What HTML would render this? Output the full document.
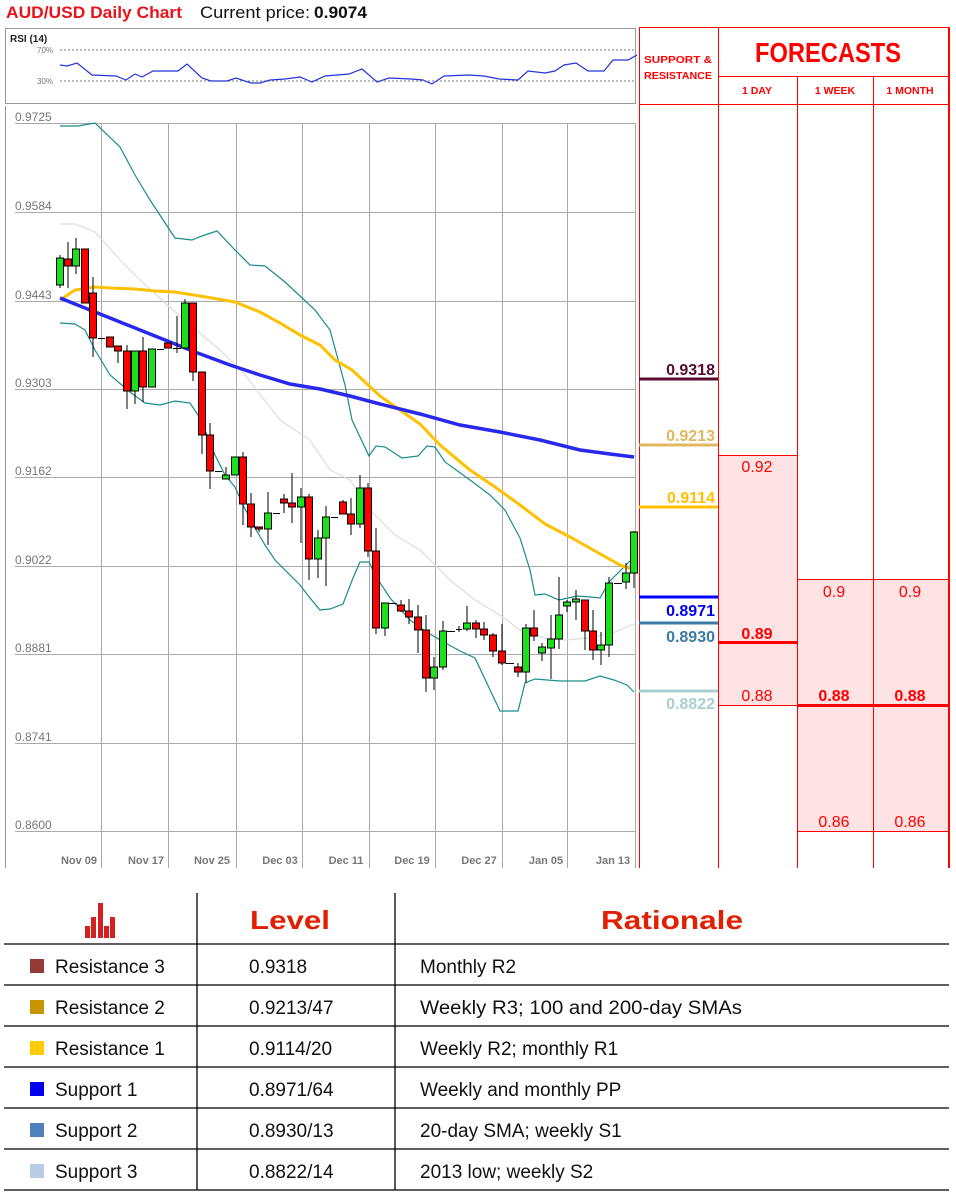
<!DOCTYPE html>
<html><head><meta charset="utf-8"><style>
body{margin:0;width:956px;height:1193px;background:#fff;overflow:hidden;font-family:"Liberation Sans",sans-serif}
svg{display:block}
</style></head><body>
<svg width="956" height="1193" viewBox="0 0 956 1193" xmlns="http://www.w3.org/2000/svg" font-family="Liberation Sans, sans-serif">
<text x="6" y="18" font-size="17" font-weight="bold" fill="#e8141c" textLength="176" lengthAdjust="spacingAndGlyphs">AUD/USD Daily Chart</text>
<text x="200" y="18" font-size="17" fill="#111" textLength="110" lengthAdjust="spacingAndGlyphs">Current price:</text>
<text x="314" y="18" font-size="17" font-weight="bold" fill="#111" textLength="53" lengthAdjust="spacingAndGlyphs">0.9074</text>

<rect x="5.5" y="28.5" width="630" height="75" fill="#fff" stroke="#999"/>
<text x="10" y="42" font-size="10" font-weight="bold" fill="#222">RSI (14)</text>
<text x="37" y="53" font-size="8" fill="#777">70%</text>
<text x="37" y="84" font-size="8" fill="#777">30%</text>
<line x1="60" y1="50" x2="635" y2="50" stroke="#777" stroke-dasharray="2,2"/>
<line x1="60" y1="81" x2="635" y2="81" stroke="#777" stroke-dasharray="2,2"/>
<polyline fill="none" stroke="#2233dd" stroke-width="1.2" points="60,65 67,66 77,63 92,75 116,76 126,80 135,74 142,77 153,71 178,71 187,64 202,78 211,81 227,81 236,78 251,83 260,83 270,80 285,79 300,77 312,82 325,76 349,74 362,69 377,82 389,78 411,79 423,80 432,84 444,76 469,75 484,76 499,79 518,80 528,71 545,73 555,71 564,65 576,63 588,71 604,71 613,60 628,60 637,55"/>

<line x1="5.5" y1="106" x2="5.5" y2="868" stroke="#999"/>
<g stroke="#aaa" stroke-width="1">
<line x1="15" y1="123.5" x2="636" y2="123.5"/><line x1="15" y1="212.5" x2="636" y2="212.5"/>
<line x1="15" y1="301.5" x2="636" y2="301.5"/><line x1="15" y1="389.5" x2="636" y2="389.5"/>
<line x1="15" y1="477.5" x2="636" y2="477.5"/><line x1="15" y1="566.5" x2="636" y2="566.5"/>
<line x1="15" y1="654.5" x2="636" y2="654.5"/><line x1="15" y1="743.5" x2="636" y2="743.5"/>
<line x1="15" y1="831.5" x2="636" y2="831.5"/>
<line x1="101.5" y1="123" x2="101.5" y2="868"/><line x1="168.5" y1="123" x2="168.5" y2="868"/>
<line x1="236.5" y1="123" x2="236.5" y2="868"/><line x1="302.5" y1="123" x2="302.5" y2="868"/>
<line x1="369.5" y1="123" x2="369.5" y2="868"/><line x1="435.5" y1="123" x2="435.5" y2="868"/>
<line x1="502.5" y1="123" x2="502.5" y2="868"/><line x1="567.5" y1="123" x2="567.5" y2="868"/>
<line x1="635.5" y1="123" x2="635.5" y2="868"/>
</g>
<g font-size="12" fill="#777">
<text x="15" y="121">0.9725</text><text x="15" y="210">0.9584</text><text x="15" y="299">0.9443</text>
<text x="15" y="387">0.9303</text><text x="15" y="475">0.9162</text><text x="15" y="564">0.9022</text>
<text x="15" y="652">0.8881</text><text x="15" y="741">0.8741</text><text x="15" y="829">0.8600</text>
</g>
<g font-size="11" font-weight="bold" fill="#777" text-anchor="middle">
<text x="79" y="864">Nov 09</text><text x="146" y="864">Nov 17</text><text x="212" y="864">Nov 25</text>
<text x="280" y="864">Dec 03</text><text x="346" y="864">Dec 11</text><text x="412" y="864">Dec 19</text>
<text x="479" y="864">Dec 27</text><text x="546" y="864">Jan 05</text><text x="613" y="864">Jan 13</text>
</g>
<polyline fill="none" stroke="#ddd" stroke-width="1.2" points="60,224 75,224 95,232 120,260 140,280 165,303 190,325 220,350 245,375 280,420 310,440 330,470 350,480 370,510 395,535 420,550 450,580 475,600 500,615 520,630 545,638 565,640 590,638 615,632 634,624"/>
<polyline fill="none" stroke="#1a8c8c" stroke-width="1.2" points="60,126 78,126 95,123 120,147 135,175 150,200 175,238 192,240 202,236 217,231 235,250 250,265 265,266 285,282 300,296 315,310 330,330 345,385 352,420 369,456 376,446 385,447 402,458 418,456 427,446 435,447 445,462 470,480 490,495 505,510 520,538 530,570 535,595 545,594 559,600 577,596 591,597 600,598 609,582 620,571 634,557"/>
<polyline fill="none" stroke="#1a8c8c" stroke-width="1.2" points="60,323 75,324 85,330 95,350 110,375 130,392 145,403 160,405 175,401 190,403 198,415 205,430 215,455 225,475 235,487 243,505 255,528 265,545 275,560 290,575 300,585 310,598 320,610 330,609 343,604 353,578 360,562 369,562 375,575 390,598 410,620 425,631 440,640 460,651 475,658 500,711 518,711 525,683 535,679 560,681 585,681 600,676 614,680 627,685 634,692"/>
<polyline fill="none" stroke="#ffc000" stroke-width="3" points="60,300 75,290 95,287 110,288 135,289 155,291 175,292 200,296 235,302 260,312 280,323 300,335 320,345 335,360 352,370 380,396 400,410 420,424 440,445 470,470 495,487 520,505 545,524 570,537 595,551 620,565 634,570"/>
<polyline fill="none" stroke="#2828ee" stroke-width="3.5" points="60,298 90,310 120,322 145,332 165,340 195,352 230,365 260,375 290,384 320,389 350,396 380,404 420,414 460,425 500,432 540,440 580,450 610,454 634,457"/>
<g stroke="#000" stroke-width="1">
<line x1="60" y1="255" x2="60" y2="288"/><rect x="56.5" y="258" width="7" height="27" fill="#1be01b"/>
<line x1="68" y1="242" x2="68" y2="288"/><rect x="64.5" y="259" width="7" height="7" fill="#f00"/>
<line x1="76" y1="238" x2="76" y2="274"/><rect x="72.5" y="249" width="7" height="17" fill="#1be01b"/>
<rect x="81.5" y="249" width="7" height="54" fill="#f00"/>
<line x1="93" y1="277" x2="93" y2="357"/><rect x="89.5" y="293" width="7" height="45" fill="#f00"/>
<line x1="98" y1="338.5" x2="105" y2="338.5"/>
<rect x="106.5" y="337" width="7" height="10" fill="#f00"/>
<line x1="118" y1="346" x2="118" y2="363"/><rect x="114.5" y="346" width="7" height="5" fill="#f00"/>
<line x1="127" y1="345" x2="127" y2="409"/><rect x="123.5" y="351" width="7" height="40" fill="#f00"/>
<line x1="135" y1="351" x2="135" y2="404"/><rect x="131.5" y="351" width="7" height="40" fill="#1be01b"/>
<line x1="143" y1="337" x2="143" y2="402"/><rect x="139.5" y="351" width="7" height="36" fill="#f00"/>
<rect x="148.5" y="349" width="7" height="38" fill="#1be01b"/>
<line x1="157" y1="349.5" x2="164" y2="349.5"/>
<rect x="164.5" y="343" width="7" height="5" fill="#f00"/>
<line x1="177" y1="316" x2="177" y2="353"/><line x1="173" y1="348.5" x2="181" y2="348.5"/>
<line x1="185" y1="299" x2="185" y2="348"/><rect x="181.5" y="303" width="7" height="45" fill="#1be01b"/>
<line x1="193" y1="303" x2="193" y2="381"/><rect x="189.5" y="303" width="7" height="69" fill="#f00"/>
<line x1="202" y1="372" x2="202" y2="454"/><rect x="198.5" y="372" width="7" height="63" fill="#f00"/>
<line x1="210" y1="423" x2="210" y2="489"/><rect x="206.5" y="435" width="7" height="36" fill="#f00"/>
<line x1="215" y1="471.5" x2="222" y2="471.5"/>
<line x1="226" y1="467" x2="226" y2="479"/><rect x="222.5" y="475" width="7" height="4" fill="#1be01b"/>
<rect x="231.5" y="457" width="7" height="18" fill="#1be01b"/>
<line x1="243" y1="452" x2="243" y2="525"/><rect x="239.5" y="457" width="7" height="47" fill="#f00"/>
<line x1="251" y1="493" x2="251" y2="537"/><rect x="247.5" y="504" width="7" height="23" fill="#f00"/>
<line x1="259" y1="527" x2="259" y2="532"/><rect x="255.5" y="527" width="7" height="2" fill="#f00"/>
<line x1="268" y1="492" x2="268" y2="545"/><rect x="264.5" y="513" width="7" height="16" fill="#1be01b"/>
<line x1="273" y1="513.5" x2="280" y2="513.5"/>
<line x1="284" y1="494" x2="284" y2="513"/><rect x="280.5" y="499" width="7" height="4" fill="#f00"/>
<line x1="292" y1="473" x2="292" y2="523"/><rect x="288.5" y="503" width="7" height="4" fill="#f00"/>
<line x1="301" y1="488" x2="301" y2="543"/><rect x="297.5" y="497" width="7" height="10" fill="#1be01b"/>
<line x1="309" y1="494" x2="309" y2="580"/><rect x="305.5" y="497" width="7" height="62" fill="#f00"/>
<line x1="318" y1="530" x2="318" y2="578"/><rect x="314.5" y="538" width="7" height="21" fill="#1be01b"/>
<line x1="326" y1="506" x2="326" y2="586"/><rect x="322.5" y="517" width="7" height="21" fill="#1be01b"/>
<line x1="331" y1="517.5" x2="338" y2="517.5"/>
<line x1="343" y1="500" x2="343" y2="514"/><rect x="339.5" y="502" width="7" height="12" fill="#f00"/>
<line x1="351" y1="498" x2="351" y2="535"/><rect x="347.5" y="514" width="7" height="10" fill="#f00"/>
<line x1="360" y1="475" x2="360" y2="528"/><rect x="356.5" y="488" width="7" height="36" fill="#1be01b"/>
<line x1="368" y1="483" x2="368" y2="557"/><rect x="364.5" y="488" width="7" height="63" fill="#f00"/>
<line x1="376" y1="528" x2="376" y2="634"/><rect x="372.5" y="551" width="7" height="77" fill="#f00"/>
<line x1="385" y1="603" x2="385" y2="636"/><rect x="381.5" y="603" width="7" height="25" fill="#1be01b"/>
<line x1="389" y1="603.5" x2="397" y2="603.5"/>
<line x1="401" y1="600" x2="401" y2="612"/><rect x="397.5" y="605" width="7" height="6" fill="#f00"/>
<line x1="409" y1="599" x2="409" y2="624"/><rect x="405.5" y="611" width="7" height="6" fill="#f00"/>
<line x1="418" y1="605" x2="418" y2="653"/><rect x="414.5" y="617" width="7" height="13" fill="#f00"/>
<line x1="426" y1="615" x2="426" y2="692"/><rect x="422.5" y="630" width="7" height="48" fill="#f00"/>
<line x1="434" y1="657" x2="434" y2="690"/><rect x="430.5" y="667" width="7" height="11" fill="#1be01b"/>
<line x1="443" y1="621" x2="443" y2="670"/><rect x="439.5" y="631" width="7" height="36" fill="#1be01b"/>
<line x1="447" y1="631.5" x2="455" y2="631.5"/>
<line x1="459" y1="626" x2="459" y2="632"/><line x1="456" y1="629.5" x2="462" y2="629.5"/>
<line x1="467" y1="606" x2="467" y2="631"/><rect x="463.5" y="623" width="7" height="6" fill="#1be01b"/>
<line x1="476" y1="620" x2="476" y2="638"/><rect x="472.5" y="623" width="7" height="6" fill="#f00"/>
<line x1="484" y1="622" x2="484" y2="640"/><rect x="480.5" y="629" width="7" height="6" fill="#f00"/>
<line x1="493" y1="633" x2="493" y2="657"/><rect x="489.5" y="635" width="7" height="16" fill="#f00"/>
<line x1="502" y1="624" x2="502" y2="665"/><rect x="498.5" y="651" width="7" height="12" fill="#f00"/>
<line x1="506" y1="663.5" x2="514" y2="663.5"/>
<line x1="518" y1="663" x2="518" y2="677"/><rect x="514.5" y="667" width="7" height="5" fill="#f00"/>
<line x1="526" y1="624" x2="526" y2="683"/><rect x="522.5" y="628" width="7" height="44" fill="#1be01b"/>
<line x1="534" y1="610" x2="534" y2="641"/><rect x="530.5" y="628" width="7" height="8" fill="#f00"/>
<line x1="542" y1="643" x2="542" y2="661"/><rect x="538.5" y="647" width="7" height="6" fill="#1be01b"/>
<line x1="551" y1="615" x2="551" y2="679"/><rect x="547.5" y="639" width="7" height="9" fill="#1be01b"/>
<line x1="559" y1="577" x2="559" y2="649"/><rect x="555.5" y="615" width="7" height="24" fill="#1be01b"/>
<line x1="567" y1="600" x2="567" y2="612"/><rect x="563.5" y="602" width="7" height="4" fill="#1be01b"/>
<line x1="576" y1="590" x2="576" y2="620"/><rect x="572.5" y="599" width="7" height="3" fill="#1be01b"/>
<line x1="585" y1="600" x2="585" y2="650"/><rect x="581.5" y="600" width="7" height="31" fill="#f00"/>
<line x1="593" y1="610" x2="593" y2="660"/><rect x="589.5" y="631" width="7" height="19" fill="#f00"/>
<line x1="601" y1="632" x2="601" y2="665"/><rect x="597.5" y="645" width="7" height="5" fill="#1be01b"/>
<line x1="609" y1="577" x2="609" y2="657"/><rect x="605.5" y="583" width="7" height="62" fill="#1be01b"/>
<line x1="614" y1="583.5" x2="622" y2="583.5"/>
<line x1="626" y1="563" x2="626" y2="589"/><rect x="622.5" y="573" width="7" height="9" fill="#1be01b"/>
<line x1="634" y1="531" x2="634" y2="588"/><rect x="630.5" y="532" width="7" height="41" fill="#1be01b"/>
</g>

<rect x="718" y="455" width="79" height="250" fill="#fde3e4"/>
<rect x="797" y="579" width="152" height="252" fill="#fde3e4"/>
<g stroke="#f00" stroke-width="1" fill="none">
<line x1="639.5" y1="27.5" x2="639.5" y2="868"/>
<line x1="718.5" y1="27.5" x2="718.5" y2="868"/>
<line x1="797.5" y1="77" x2="797.5" y2="868"/>
<line x1="873.5" y1="77" x2="873.5" y2="868"/>
<line x1="639" y1="27.5" x2="949" y2="27.5"/>
<line x1="718" y1="76.5" x2="949" y2="76.5"/>
<line x1="639" y1="104.5" x2="949" y2="104.5"/>
<line x1="718" y1="455.5" x2="797" y2="455.5"/>
<line x1="718" y1="705.5" x2="797" y2="705.5"/>
<line x1="797" y1="579.5" x2="949" y2="579.5"/>
<line x1="797" y1="831.5" x2="949" y2="831.5"/>
</g>
<line x1="949" y1="27" x2="949" y2="868" stroke="#f00" stroke-width="2"/>
<line x1="718" y1="642.5" x2="797" y2="642.5" stroke="#f00" stroke-width="3"/>
<line x1="797" y1="705.5" x2="949" y2="705.5" stroke="#f00" stroke-width="3"/>
<g fill="#f00" font-weight="bold" text-anchor="middle">
<text x="678" y="63" font-size="10.5" textLength="68" lengthAdjust="spacingAndGlyphs">SUPPORT &amp;</text>
<text x="678" y="79" font-size="10.5" textLength="68" lengthAdjust="spacingAndGlyphs">RESISTANCE</text>
<text x="828" y="62" font-size="28" textLength="146" lengthAdjust="spacingAndGlyphs">FORECASTS</text>
<text x="757" y="94" font-size="10.5">1 DAY</text>
<text x="835" y="94" font-size="10.5">1 WEEK</text>
<text x="910" y="94" font-size="10.5">1 MONTH</text>
</g>
<g fill="#f00" font-size="16" text-anchor="middle">
<text x="757" y="472">0.92</text>
<text x="757" y="639" font-weight="bold">0.89</text>
<text x="757" y="701">0.88</text>
<text x="834" y="597">0.9</text><text x="910" y="597">0.9</text>
<text x="834" y="701" font-weight="bold">0.88</text><text x="910" y="701" font-weight="bold">0.88</text>
<text x="834" y="827">0.86</text><text x="910" y="827">0.86</text>
</g>
<g stroke-width="3">
<line x1="639" y1="379" x2="718" y2="379" stroke="#5a0a2e"/>
<line x1="639" y1="445" x2="718" y2="445" stroke="#e0b860"/>
<line x1="639" y1="507" x2="718" y2="507" stroke="#ffc000"/>
<line x1="639" y1="597" x2="718" y2="597" stroke="#0000ff"/>
<line x1="639" y1="623" x2="718" y2="623" stroke="#3a7ca5"/>
<line x1="639" y1="691" x2="718" y2="691" stroke="#a8d0d0"/>
</g>
<g font-size="16" font-weight="bold" text-anchor="end">
<text x="715" y="375" fill="#5a0a2e">0.9318</text>
<text x="715" y="441" fill="#e0b860">0.9213</text>
<text x="715" y="503" fill="#ffc000">0.9114</text>
<text x="715" y="616" fill="#0000ee">0.8971</text>
<text x="715" y="642" fill="#3a7ca5">0.8930</text>
<text x="715" y="709" fill="#a8d0d0">0.8822</text>
</g>

<g fill="#d42020">
<rect x="85" y="926" width="5" height="12"/><rect x="91" y="917" width="5" height="21"/>
<rect x="98" y="903" width="5" height="35"/><rect x="104" y="926" width="5" height="12"/>
<rect x="110" y="917" width="5" height="21"/>
</g>
<text x="290" y="929" font-size="26" font-weight="bold" fill="#e02000" text-anchor="middle" textLength="80" lengthAdjust="spacingAndGlyphs">Level</text>
<text x="672" y="929" font-size="26" font-weight="bold" fill="#e02000" text-anchor="middle" textLength="142" lengthAdjust="spacingAndGlyphs">Rationale</text>
<g stroke="#000" stroke-width="1.3">
<line x1="197" y1="893" x2="197" y2="1190"/><line x1="395" y1="893" x2="395" y2="1190"/>
<line x1="4" y1="944" x2="949" y2="944"/><line x1="4" y1="985" x2="949" y2="985"/>
<line x1="4" y1="1026" x2="949" y2="1026"/><line x1="4" y1="1067" x2="949" y2="1067"/>
<line x1="4" y1="1108" x2="949" y2="1108"/><line x1="4" y1="1149" x2="949" y2="1149"/>
<line x1="4" y1="1190" x2="949" y2="1190"/>
</g>
<rect x="30" y="959" width="14" height="14" fill="#943838"/>
<rect x="30" y="1000" width="14" height="14" fill="#c89400"/>
<rect x="30" y="1041" width="14" height="14" fill="#ffcc00"/>
<rect x="30" y="1082" width="14" height="14" fill="#0000ee"/>
<rect x="30" y="1123" width="14" height="14" fill="#4f81bd"/>
<rect x="30" y="1164" width="14" height="14" fill="#b8cce4"/>
<g font-size="19" fill="#111">
<text x="55" y="973">Resistance 3</text><text x="55" y="1014">Resistance 2</text><text x="55" y="1055">Resistance 1</text>
<text x="55" y="1096">Support 1</text><text x="55" y="1137">Support 2</text><text x="55" y="1178">Support 3</text>
<text x="249" y="973">0.9318</text><text x="249" y="1014">0.9213/47</text><text x="249" y="1055">0.9114/20</text>
<text x="249" y="1096">0.8971/64</text><text x="249" y="1137">0.8930/13</text><text x="249" y="1178">0.8822/14</text>
<text x="420" y="973">Monthly R2</text>
<text x="420" y="1014" textLength="322" lengthAdjust="spacingAndGlyphs">Weekly R3; 100 and 200-day SMAs</text>
<text x="420" y="1055">Weekly R2; monthly R1</text>
<text x="420" y="1096">Weekly and monthly PP</text>
<text x="420" y="1137">20-day SMA; weekly S1</text>
<text x="420" y="1178">2013 low; weekly S2</text>
</g>
</svg>
</body></html>
